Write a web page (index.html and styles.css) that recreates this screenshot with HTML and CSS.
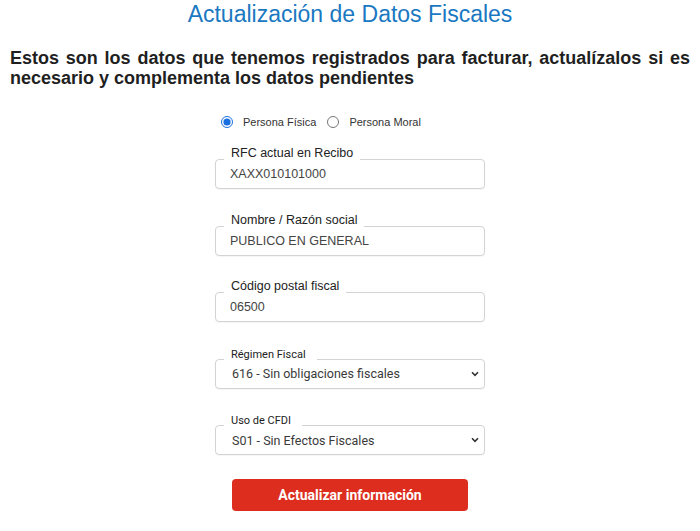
FILE: index.html
```html
<!DOCTYPE html>
<html lang="es">
<head>
<meta charset="utf-8">
<title>Actualización de Datos Fiscales</title>
<link rel="stylesheet" href="styles.css">
</head>
<body>
<h1 class="title">Actualización de Datos Fiscales</h1>
<p class="intro">Estos son los datos que tenemos registrados para facturar, actualízalos si es necesario y complementa los datos pendientes</p>
<form class="form">
  <div class="radios">
    <label class="radio"><input type="radio" name="tipo" checked><span>Persona Física</span></label>
    <label class="radio"><input type="radio" name="tipo"><span>Persona Moral</span></label>
  </div>
  <div class="fields">
    <div class="field">
      <span class="float-label">RFC actual en Recibo</span>
      <input class="control" type="text" value="XAXX010101000">
    </div>
    <div class="field">
      <span class="float-label">Nombre / Razón social</span>
      <input class="control" type="text" value="PUBLICO EN GENERAL">
    </div>
    <div class="field">
      <span class="float-label">Código postal fiscal</span>
      <input class="control" type="text" value="06500">
    </div>
    <div class="field">
      <span class="float-label small">Régimen Fiscal</span>
      <div class="control select">
        <span>616 - Sin obligaciones fiscales</span>
        <svg class="chev" width="8" height="6" viewBox="0 0 8 6"><path d="M1 1.3 L4 4.3 L7 1.3" fill="none" stroke="#333" stroke-width="1.6"/></svg>
      </div>
    </div>
    <div class="field">
      <span class="float-label small">Uso de CFDI</span>
      <div class="control select">
        <span>S01 - Sin Efectos Fiscales</span>
        <svg class="chev" width="8" height="6" viewBox="0 0 8 6"><path d="M1 1.3 L4 4.3 L7 1.3" fill="none" stroke="#333" stroke-width="1.6"/></svg>
      </div>
    </div>
  </div>
  <button class="submit" type="button">Actualizar información</button>
</form>
</body>
</html>
```
FILE: styles.css
```css
html, body {
  margin: 0;
  padding: 0;
  background: #fff;
}
body {
  font-family: "Liberation Sans", Arial, sans-serif;
  color: #222;
  width: 700px;
}
.title {
  margin: 1px 0 0;
  font-size: 23px;
  font-weight: normal;
  line-height: 26px;
  color: #1a78c2;
  text-align: center;
}
.intro {
  margin: 22px 0 0;
  padding: 0 10px;
  font-size: 18px;
  font-weight: bold;
  line-height: 19.5px;
  text-align: justify;
  color: #1f1f1f;
}
.form {
  width: 270px;
  margin: 27px auto 0;
  display: flex;
  flex-direction: column;
}
.radios {
  display: flex;
  align-items: center;
  padding-left: 6px;
  height: 14px;
  font-size: 11px;
  color: #333;
}
.radio {
  display: flex;
  align-items: center;
  margin-right: 11px;
}
.radio input {
  width: 12px;
  height: 12px;
  margin: 0 10px 0 0;
  accent-color: #1a6fe0;
}
.fields {
  margin-top: 30px;
  display: flex;
  flex-direction: column;
  gap: 36.5px;
}
.field {
  position: relative;
}
.float-label {
  position: absolute;
  top: -13px;
  left: 9px;
  padding: 0 7px 0 7px;
  background: #fff;
  font-size: 12.5px;
  line-height: 14px;
  color: #222;
}
.float-label.small {
  font-family: Roboto, "Liberation Sans", sans-serif;
  font-size: 11px;
  line-height: 13px;
  top: -11px;
  padding: 0 11px 0 7px;
}
.control {
  box-sizing: border-box;
  display: block;
  width: 270px;
  height: 30px;
  margin: 0;
  padding: 0 14px;
  border: 1px solid #d3d3d3;
  border-radius: 4px;
  background: #fff;
  font-family: "Liberation Sans", Arial, sans-serif;
  font-size: 12.5px;
  color: #444;
  box-shadow: 0 1px 1px rgba(0,0,0,0.04);
  outline: none;
}
.select {
  display: flex;
  align-items: center;
  justify-content: space-between;
  padding: 0 5px 0 16px;
  font-family: Roboto, "Liberation Sans", sans-serif;
  font-size: 12.5px;
  color: #3a3a3a;
}
.chev {
  display: block;
}
.submit {
  align-self: center;
  margin-top: 24px;
  width: 236px;
  height: 32px;
  border: none;
  border-radius: 4px;
  background: #dc2d1e;
  color: #fff;
  font-family: Roboto, "Liberation Sans", sans-serif;
  font-weight: bold;
  font-size: 14px;
  cursor: pointer;
}
```
